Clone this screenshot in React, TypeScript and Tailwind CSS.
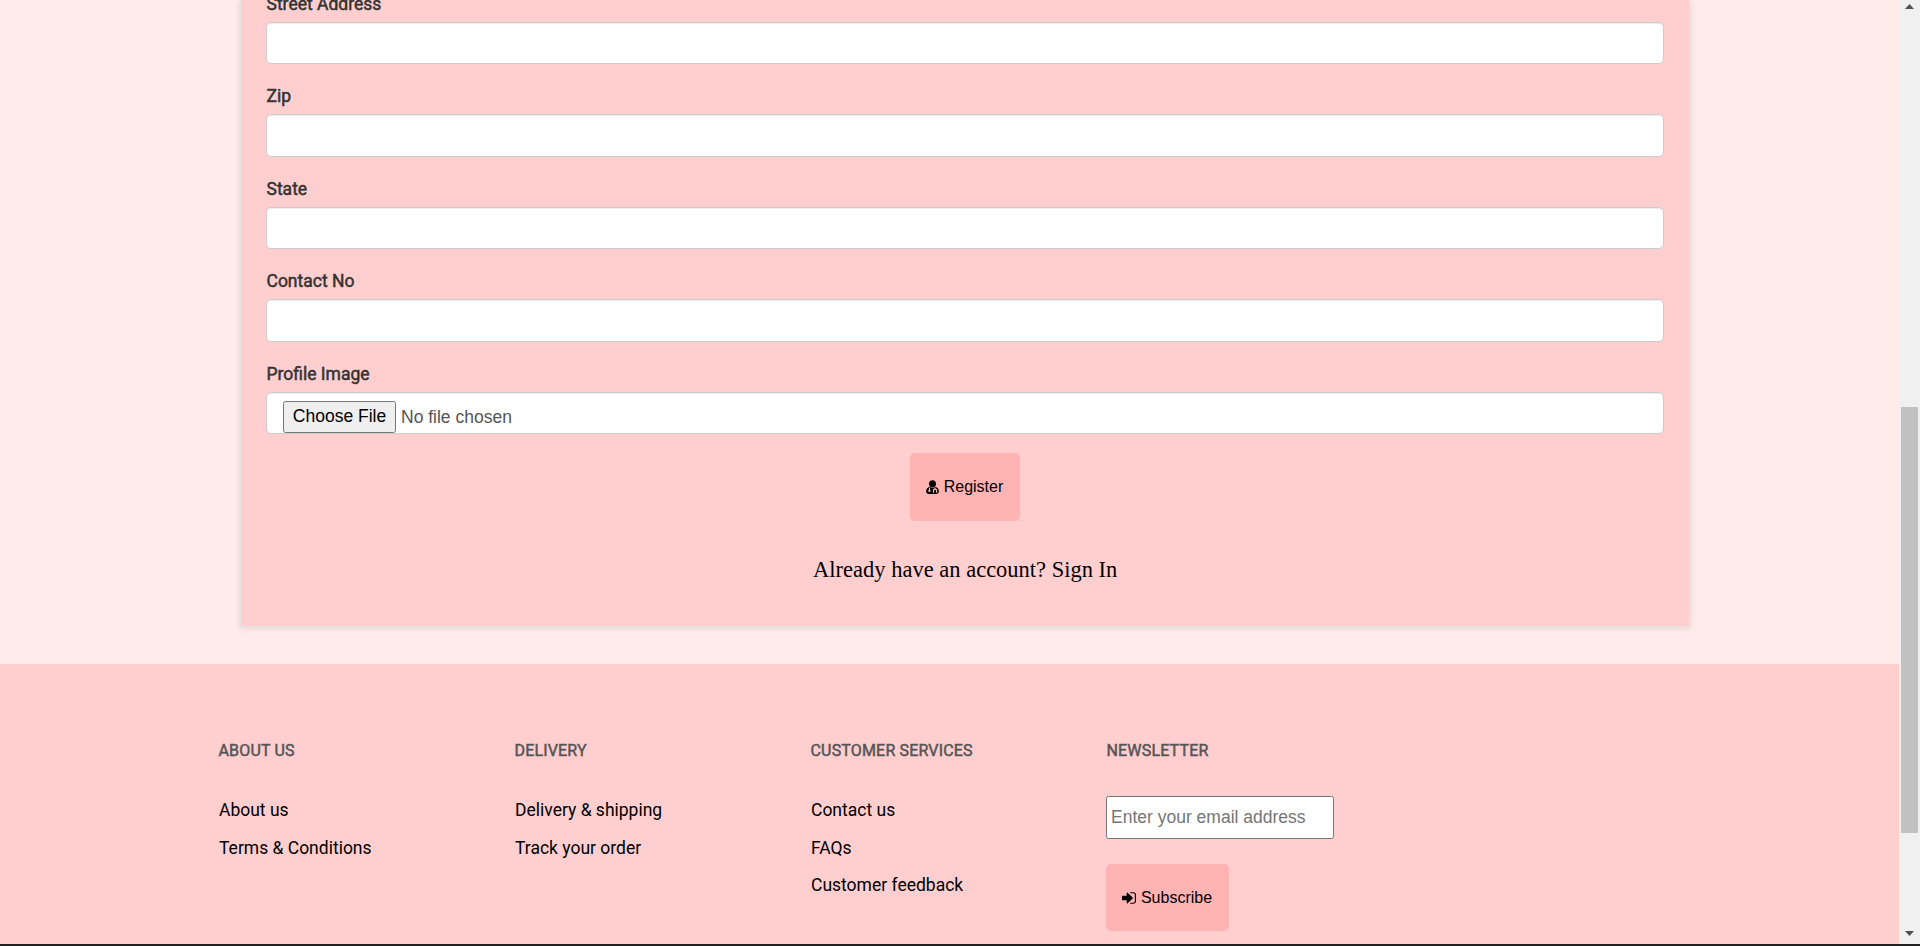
import React from 'react';

const sans = "font-['Liberation_Sans',Arial,sans-serif]";

function Field({ label, children }: { label: string; children?: React.ReactNode }) {
  return (
    <div className="mb-[19px] h-[73.5px]">
      <label className="block h-[31px] pl-[0.5px] pt-px text-[17.5px] leading-[25px] text-[#333] [-webkit-text-stroke:0.5px_#333]">
        {label}
      </label>
      <div className="flex h-[42.5px] items-start overflow-hidden rounded-[5px] border border-[#ccc] bg-white px-4 shadow-[inset_0_1px_1px_rgba(0,0,0,0.075)]">
        {children}
      </div>
    </div>
  );
}

function DoctorIcon() {
  return (
    <svg viewBox="0 0 1408 1536" className="mr-[5px] h-[14px] w-[13px]" fill="currentColor">
      <circle cx="704" cy="400" r="385" />
      <path
        fillRule="evenodd"
        d="M400 740C120 800 0 1010 0 1270q0 266 266 266h876q266 0 266-266c0-260-120-470-400-530q-130 110-304 110T400 740ZM310 850h120v220a130 130 0 1 1-120 0ZM930 830h110v110q180 30 180 190v260h-130v-240q0-90-105-90t-105 90v240H750v-260q0-160 180-190Z"
      />
    </svg>
  );
}

function SignInIcon() {
  return (
    <svg viewBox="0 256 1536 1280" className="mr-[5px] h-[12px] w-[14px]" fill="currentColor">
      <path d="M1184 896q0 26-19 45l-544 544q-19 19-45 19t-45-19-19-45v-288h-448q-26 0-45-19t-19-45v-384q0-26 19-45t45-19h448v-288q0-26 19-45t45-19 45 19l544 544q19 19 19 45zm352-352v704q0 119-84.5 203.5t-203.5 84.5h-320q-13 0-22.5-9.5t-9.5-22.5q0-4-1-20t-.5-26.5 3-23.5 10-19.5 20.5-6.5h320q66 0 113-47t47-113v-704q0-66-47-113t-113-47h-312l-11.5-1-11.5-3-8-5.5-7-9-2-13.5q0-4-1-20t-.5-26.5 3-23.5 10-19.5 20.5-6.5h320q119 0 203.5 84.5t84.5 203.5z" />
    </svg>
  );
}

function Column({ title, links, children }: { title: string; links?: string[]; children?: React.ReactNode }) {
  return (
    <div className="w-[296px] shrink-0">
      <h4 className="mb-[33px] h-[25px] text-[16px] leading-[25px] tracking-[0.17px] text-[#555] [-webkit-text-stroke:0.5px_#555]">
        {title}
      </h4>
      {links && (
        <nav className="pl-[0.5px] pt-[2px]">
          {links.map((l) => (
            <a key={l} className="block h-[37.5px] text-[17.5px] leading-[25px] text-black">
              {l}
            </a>
          ))}
        </nav>
      )}
      {children}
    </div>
  );
}

export default function App() {
  return (
    <div className="flex h-[946px] w-full overflow-hidden bg-[#ffecea] font-[Roboto,sans-serif]">
      <div className="flex min-w-0 flex-1 flex-col">
        <main className="h-[664px] shrink-0 overflow-hidden pl-[240px]">
          <form className="flex h-[627px] w-[1450px] flex-col justify-end border border-t-0 border-[#e7e3e2] bg-[#ffcfcf] px-[25px] shadow-[0_1px_6px_rgba(0,0,0,0.12)]">
            <Field label="Street Address" />
            <Field label="Zip" />
            <Field label="State" />
            <Field label="Contact No" />
            <Field label="Profile Image">
              <button
                type="button"
                className={`mt-2 h-[32px] w-[113px] shrink-0 rounded-[2.5px] border border-[#767676] bg-[#efefef] text-[17.5px] leading-[29px] text-black ${sans}`}
              >
                Choose File
              </button>
              <span className={`ml-[5px] mt-[12px] text-[17.5px] leading-[24px] text-[#555] ${sans}`}>No file chosen</span>
            </Field>
            <div className="flex h-[173px] shrink-0 flex-col items-center">
              <button
                type="button"
                className={`flex h-[68px] w-[110px] shrink-0 items-center justify-center rounded-[5px] bg-[#ffb3b3] pr-px text-[16px] text-black ${sans}`}
              >
                <DoctorIcon />
                Register
              </button>
              <p className="mt-[35px] pl-[0.5px] font-['Liberation_Serif',serif] text-[22.5px] leading-[28px] text-black">
                Already have an account? Sign In
              </p>
            </div>
          </form>
        </main>
        <footer className="flex h-[280px] shrink-0 bg-[#ffcfcf] pl-[218.5px] pt-[74px]">
          <Column title="ABOUT US" links={['About us', 'Terms & Conditions']} />
          <Column title="DELIVERY" links={['Delivery & shipping', 'Track your order']} />
          <Column title="CUSTOMER SERVICES" links={['Contact us', 'FAQs', 'Customer feedback']} />
          <Column title="NEWSLETTER">
            <input
              type="email"
              placeholder="Enter your email address"
              className={`-ml-[0.5px] block h-[43px] w-[228px] rounded-[2.5px] border border-[#767676] bg-white px-1 text-[17.5px] text-black placeholder:text-[#757575] ${sans}`}
            />
            <button
              type="button"
              className={`-ml-[0.5px] mt-[25px] flex h-[67px] w-[123px] items-center justify-center rounded-[5px] bg-[#ffb3b3] pr-px text-[16px] text-black ${sans}`}
            >
              <SignInIcon />
              Subscribe
            </button>
          </Column>
        </footer>
        <div className="h-[2px] shrink-0 bg-[#222]" />
      </div>
      <div className="flex h-[946px] w-[21px] flex-col">
        <div className="flex h-[944px] flex-col items-center bg-[#f0f0f0]">
          <svg viewBox="0 0 9 5" className="mt-[4px] h-[5px] w-[9px] shrink-0" fill="#505050">
            <path d="M0 5 4.5 0 9 5Z" />
          </svg>
          <div className="mt-[398px] h-[426px] w-[17px] shrink-0 bg-[#c1c1c1]" />
          <svg viewBox="0 0 9 5" className="mt-[98px] h-[5px] w-[9px] shrink-0" fill="#505050">
            <path d="M0 0H9L4.5 5Z" />
          </svg>
        </div>
        <div className="h-[2px] bg-[#222]" />
      </div>
    </div>
  );
}
